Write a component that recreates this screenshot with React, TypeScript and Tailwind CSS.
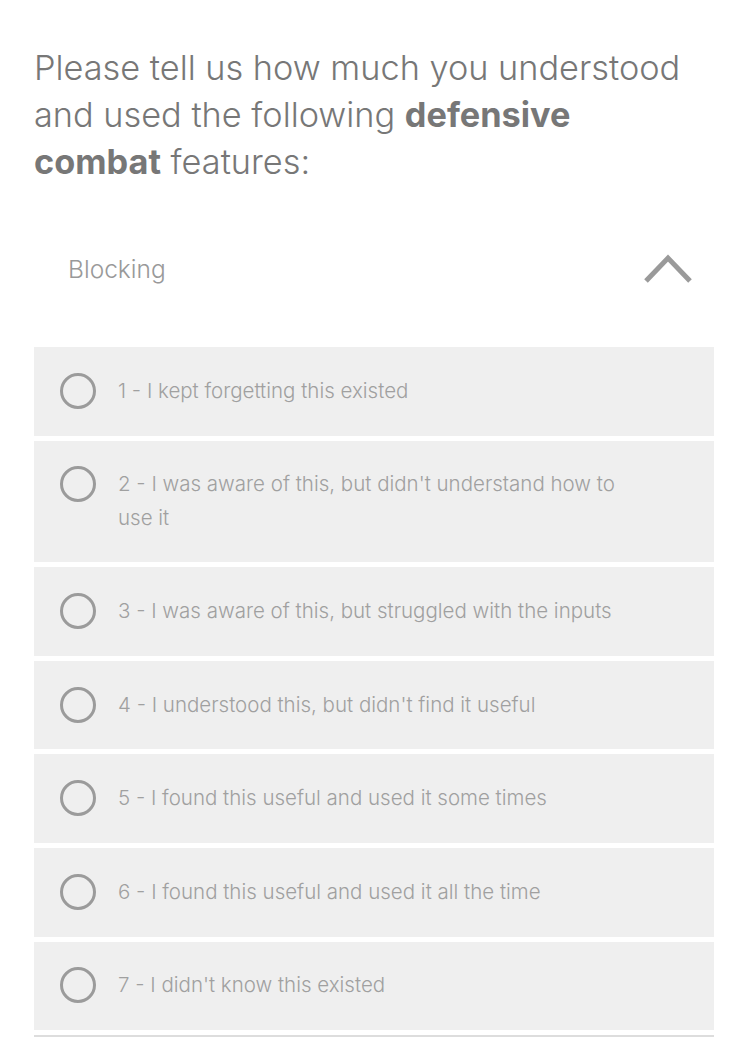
import React from "react";

const options = [
  "1 - I kept forgetting this existed",
  "2 - I was aware of this, but didn't understand how to use it",
  "3 - I was aware of this, but struggled with the inputs",
  "4 - I understood this, but didn't find it useful",
  "5 - I found this useful and used it some times",
  "6 - I found this useful and used it all the time",
  "7 - I didn't know this existed",
];

export default function App() {
  return (
    <div
      className="min-h-[1044px] w-[748px] bg-white px-[34px] pt-[44px]"
      style={{ fontFamily: "Inter, 'Noto Sans', sans-serif" }}
    >
      <h1 className="max-w-[660px] text-[34.3px] leading-[47px] font-light text-[#777777]">
        Please tell us how much you understood and used the following{" "}
        <span className="font-bold">defensive combat</span> features:
      </h1>

      <div className="mt-[55px] flex h-[58px] items-center justify-between pl-[34px] pr-[22px]">
        <span className="text-[24.5px] font-light text-[#999999]">Blocking</span>
        <svg width="48" height="30" viewBox="0 0 48 30" fill="none">
          <path d="M2 27 L24 4 L46 27" stroke="#9a9a9a" strokeWidth="5" />
        </svg>
      </div>

      <div className="mt-[49px] flex flex-col gap-[5px] border-b-2 border-[#dddddd] pb-[5px]">
        {options.map((o) => (
          <div key={o} className="flex items-start bg-[#efefef] py-[26.8px] pl-[26px] pr-[76px] leading-[34px]">
            <span className="mt-[-1px] mr-[22px] h-[36px] w-[36px] shrink-0 rounded-full border-[3px] border-[#9b9b9b]" />
            <span className="text-[20.5px] leading-[34px] font-light text-[#a0a0a0]">{o}</span>
          </div>
        ))}
      </div>
    </div>
  );
}
